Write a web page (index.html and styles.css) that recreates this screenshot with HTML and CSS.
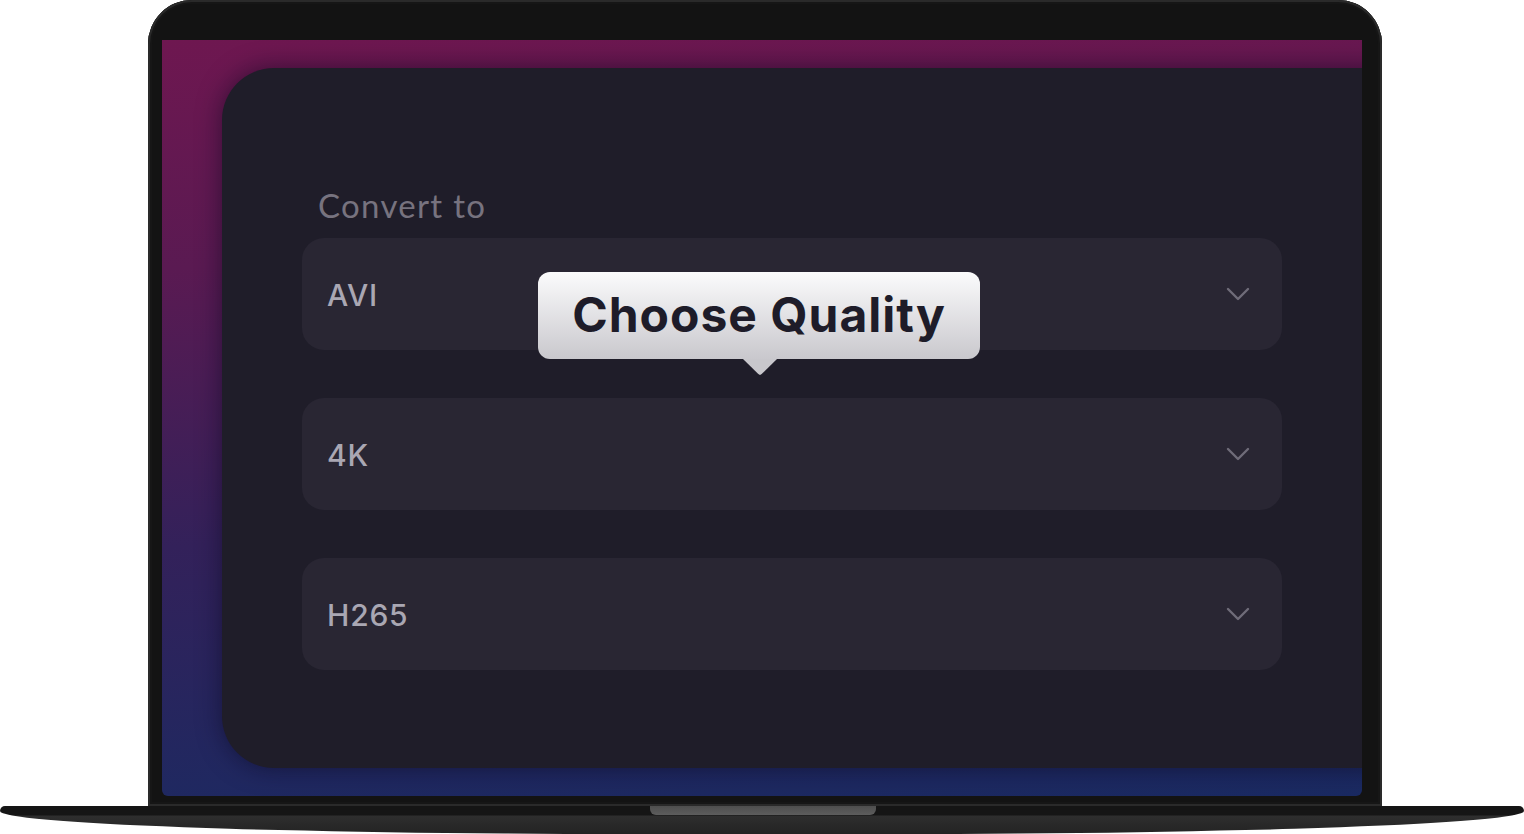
FILE: index.html
```html
<!DOCTYPE html>
<html lang="en">
<head>
  <meta charset="UTF-8">
  <meta name="viewport" content="width=device-width, initial-scale=1.0">
  <title>Convert to</title>
  <link rel="stylesheet" href="styles.css">
</head>
<body>
  <div class="laptop">
    <div class="lid">
      <div class="screen">
        <div class="panel">
          <div class="label">Convert to</div>

          <div class="field">
            <span>AVI</span>
            <svg class="chevron" viewBox="0 0 24 14" width="24" height="14"><path d="M2 2l10 10L22 2"/></svg>
          </div>

          <div class="field">
            <span>4K</span>
            <svg class="chevron" viewBox="0 0 24 14" width="24" height="14"><path d="M2 2l10 10L22 2"/></svg>
          </div>

          <div class="field">
            <span>H265</span>
            <svg class="chevron" viewBox="0 0 24 14" width="24" height="14"><path d="M2 2l10 10L22 2"/></svg>
          </div>

          <div class="tooltip">Choose Quality</div>
        </div>
      </div>
    </div>
    <div class="base">
      <div class="notch"></div>
    </div>
  </div>
</body>
</html>
```

FILE: styles.css
```css
body {
  margin: 0;
  background: #ffffff;
  font-family: 'Inter', 'Noto Sans', sans-serif;
  overflow: hidden;
}
.laptop {
  width: 1524px;
  height: 834px;
  display: flex;
  flex-direction: column;
}
.lid {
  margin-left: 148px;
  width: 1234px;
  height: 806px;
  box-sizing: border-box;
  padding: 40px 20px 10px 14px;
  background: #131313;
  border-radius: 44px 44px 0 0;
  box-shadow: inset 0 0 0 2px #2a2a2a, inset 0 0 0 4px #161616;
}
.screen {
  height: 756px;
  overflow: hidden;
  padding: 28px 0 0 60px;
  box-sizing: border-box;
  border-radius: 0 0 6px 6px;
  background: linear-gradient(177deg, #6e1750 0%, #5a1a52 28%, #33215a 62%, #1a2a62 100%);
}
.panel {
  position: relative;
  width: 1240px;
  height: 700px;
  box-sizing: border-box;
  padding: 117px 0 0 80px;
  background: #1f1d29;
  border-radius: 52px 0 0 52px;
  box-shadow: 0 0 24px rgba(10, 8, 30, 0.55);
}
.label {
  margin-left: 16px;
  font-family: 'Lato', 'Inter', sans-serif;
  font-size: 33px;
  line-height: 40px;
  color: #77737f;
  margin-bottom: 13px;
  letter-spacing: 1.3px;
}
.field {
  width: 980px;
  height: 112px;
  box-sizing: border-box;
  padding: 0 32px 0 25px;
  margin-bottom: 48px;
  display: flex;
  align-items: center;
  justify-content: space-between;
  background: #292633;
  border-radius: 22px;
  font-size: 30px;
  font-weight: 500;
  color: #a9a7b3;
  letter-spacing: 0.8px;
}
.field span {
  margin-top: 2px;
}
.chevron {
  fill: none;
  stroke: #6f6c79;
  stroke-width: 2.4;
  stroke-linecap: round;
  stroke-linejoin: round;
}
.tooltip {
  position: absolute;
  left: 316px;
  top: 204px;
  width: 442px;
  height: 87px;
  box-sizing: border-box;
  padding-bottom: 2px;
  display: flex;
  align-items: center;
  justify-content: center;
  background: linear-gradient(#fbfbfc, #c9c8cd);
  border-radius: 12px;
  font-size: 48px;
  font-weight: 700;
  color: #1e1c29;
  letter-spacing: 1px;
}
/* pointer under the bubble */
.tooltip::after {
  content: '';
  position: absolute;
  left: 205px;
  bottom: -16px;
  width: 34px;
  height: 16px;
  background: #c8c7cc;
  clip-path: polygon(0 0, 100% 0, 55% 94%, 50% 100%, 45% 94%);
}
.base {
  position: relative;
  height: 28px;
  background: linear-gradient(#151515 0, #151515 9px, #2e2e2e 10px, #232323 100%);
  border-radius: 6px 6px 50% 50% / 6px 6px 100% 100%;
}
.notch {
  position: absolute;
  left: 650px;
  top: 0;
  width: 226px;
  height: 9px;
  background: linear-gradient(#4e4e4e, #5d5d5d);
  border-radius: 0 0 6px 6px;
}
```
